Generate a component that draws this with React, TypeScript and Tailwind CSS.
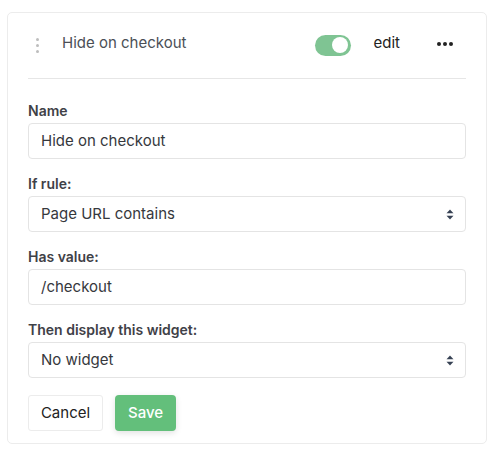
import { useState } from 'react'

const FIELDS = [
  { label: 'Name', value: 'Hide on checkout', select: false },
  { label: 'If rule:', value: 'Page URL contains', select: true },
  { label: 'Has value:', value: '/checkout', select: false },
  { label: 'Then display this widget:', value: 'No widget', select: true },
]

function Chevrons() {
  return (
    <svg width="8" height="11" viewBox="0 0 8 11" className="text-gray-700">
      <path d="M4 0.5 L7.5 4.2 H0.5 Z" fill="currentColor" />
      <path d="M4 10.5 L7.5 6.8 H0.5 Z" fill="currentColor" />
    </svg>
  )
}

export default function App() {
  const [enabled, setEnabled] = useState(true)

  return (
    <div className="min-h-screen bg-white pt-[12px] pl-[7px]" style={{ fontFamily: 'Inter, "Noto Sans", sans-serif' }}>
      <div className="w-[480px] rounded-[5px] border border-[#ececec] bg-white px-5 pb-[12px]">
        {/* header */}
        <div className="flex h-[24px] items-center mt-[20px]">
          <div className="ml-[8px] flex w-[3px] flex-col gap-[3px]">
            <span className="h-[3px] w-[3px] rounded-full bg-[#bdbdbd]" />
            <span className="h-[3px] w-[3px] rounded-full bg-[#bdbdbd]" />
            <span className="h-[3px] w-[3px] rounded-full bg-[#bdbdbd]" />
          </div>
          <span className="ml-[23px] -mt-[3px] text-[15px] text-[#4b4f56]">Hide on checkout</span>
          <button
            onClick={() => setEnabled(!enabled)}
            className={`ml-auto flex h-[21px] w-[36px] items-center rounded-full px-[3px] ${enabled ? 'justify-end bg-[#7fc493]' : 'justify-start bg-gray-300'}`}
          >
            <span className="h-[16px] w-[16px] rounded-full bg-white" />
          </button>
          <span className="ml-[23px] -mt-[3px] text-[15px] text-[#222]">edit</span>
          <span className="ml-[37px] mr-[13px] -mt-[3px] flex gap-[2px]">
            <span className="h-[4px] w-[4px] rounded-full bg-[#222]" />
            <span className="h-[4px] w-[4px] rounded-full bg-[#222]" />
            <span className="h-[4px] w-[4px] rounded-full bg-[#222]" />
          </span>
        </div>
        <div className="mt-[21px] h-px bg-[#e6e6e6]" />

        {/* form */}
        <div className="mt-[22px] flex flex-col gap-[15px]">
          {FIELDS.map(f => (
            <div key={f.label}>
              <div className="h-[20px] text-[14px] font-semibold leading-[20px] text-[#3f4147]">{f.label}</div>
              <div className="mt-[2px] flex h-[36px] items-center rounded-[4px] border border-[#e4e4e4] bg-white pl-[12px] pr-[11px]">
                <span className="text-[15px] text-[#36383d]">{f.value}</span>
                {f.select && (
                  <span className="ml-auto">
                    <Chevrons />
                  </span>
                )}
              </div>
            </div>
          ))}
        </div>

        {/* actions */}
        <div className="mt-[17px] flex gap-[12px]">
          <button className="h-[36px] w-[75px] rounded-[3px] border border-[#ececec] bg-white text-[15px] text-[#222]">Cancel</button>
          <button className="h-[36px] w-[61px] rounded-[4px] bg-[#63bf7b] text-[15px] font-medium text-white shadow-[0_2px_6px_rgba(0,0,0,0.12)]">Save</button>
        </div>
      </div>
    </div>
  )
}
